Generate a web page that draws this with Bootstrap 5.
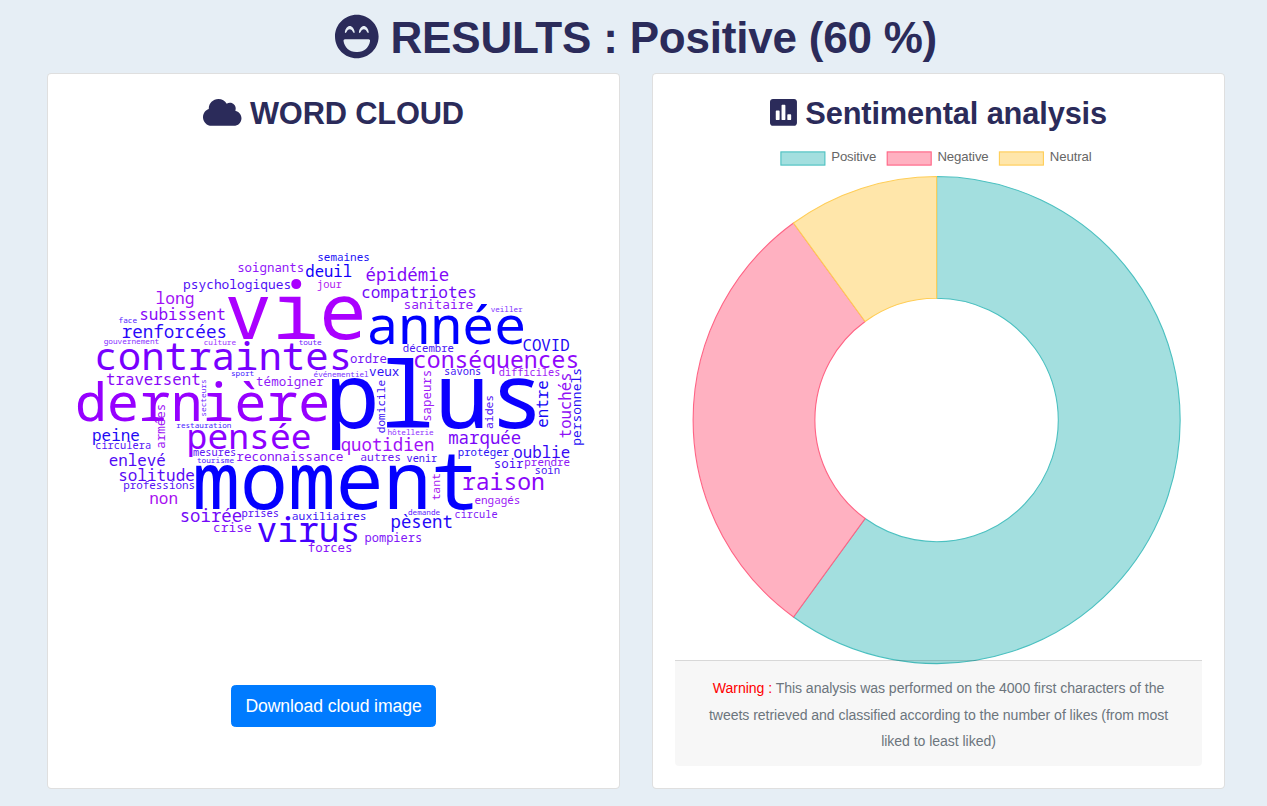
<!DOCTYPE html>
<html lang="en">
<head>
<meta charset="utf-8">
<meta name="viewport" content="width=device-width, initial-scale=1">
<title>Results</title>
<link href="https://cdn.jsdelivr.net/npm/bootstrap@5.3.0/dist/css/bootstrap.min.css" rel="stylesheet">
<style>
  html { font-size: 17.6px; }
  body { background: #e6eef5; font-family: "Liberation Sans", Arial, sans-serif; height: 806px; overflow: hidden; }
  .results { padding: 11px 42px 17px 47px; height: 806px; }
  h1, h2 { color: #2b2b5a; font-weight: 700; white-space: nowrap; }
  h1 { font-size: 44px; line-height: 53px; margin-bottom: 9px; letter-spacing: -.21px; }
  h2 { font-size: 30.8px; line-height: 35px; margin-bottom: 10.8px; letter-spacing: -.15px; }
  .fa { height: 1em; vertical-align: -.125em; fill: currentColor; overflow: visible; }
  h1 .fa { height: 45px; }
  .panels { gap: 32px; }
  .panel { border: 1px solid rgba(0,0,0,.125); border-radius: 4.4px; background: #fff; flex: 1 1 0; min-width: 0; }
  .panel .card-body { padding: 22px; }
  .plot { display: block; width: 527px; overflow: visible; }
  .btn-download { background: #007bff; border-color: #007bff; color: #fff; font-size: 17.6px; line-height: 26.8px; padding: 7.2px 13.2px 6px; border-radius: 4.4px; letter-spacing: -.09px; }
  .note { position: relative; background: rgba(0,0,0,.03); border-top: 1px solid rgba(0,0,0,.125); border-radius: 0 0 4px 4px; height: 106.4px; padding: 14.3px 22px 0; color: #6c757d; font-size: 14.08px; line-height: 26.4px; letter-spacing: -.055px; }
  .note b { color: #f00; font-weight: 400; }
  #cloud text { font-family: "Droid Sans Mono", "Noto Sans Mono", "DejaVu Sans Mono", monospace; }
  .legend-text { font: 13.2px "Liberation Sans", Arial, sans-serif; fill: #666; }
</style>
</head>
<body>
<main class="results d-flex flex-column">
  <h1 class="text-center"><svg class="fa" viewBox="0 0 496 512"><path d="M248 8C111 8 0 119 0 256s111 248 248 248 248-111 248-248S385 8 248 8zm24 199.4c3.3-42.1 32.2-71.4 56-71.4s52.7 29.3 56 71.4c.7 8.6-10.8 11.9-14.9 4.5l-9.5-17c-7.7-13.7-19.2-21.6-31.5-21.6s-23.8 7.9-31.5 21.6l-9.5 17c-4.2 7.4-15.8 4.1-15.1-4.5zm-160 0c3.3-42.1 32.2-71.4 56-71.4s52.7 29.3 56 71.4c.7 8.6-10.8 11.9-14.9 4.5l-9.5-17c-7.7-13.7-19.2-21.6-31.5-21.6s-23.8 7.9-31.5 21.6l-9.5 17c-4.3 7.4-15.8 4-15.1-4.5zM398.9 306C390 377 329.4 432 256 432h-16c-73.4 0-134-55-142.9-126-1.2-9.5 6.3-18 15.9-18h270c9.6 0 17.1 8.4 15.9 18z"/></svg> RESULTS : Positive (60 %)</h1>
  <div class="panels d-flex flex-grow-1">
    <section class="card panel">
      <div class="card-body text-center">
        <h2><svg class="fa" viewBox="0 0 640 512"><path d="M537.6 226.6c4.1-10.7 6.4-22.4 6.4-34.6 0-53-43-96-96-96-19.7 0-38.1 6-53.3 16.2C367 64.2 315.3 32 256 32c-88.4 0-160 71.6-160 160 0 2.7.1 5.4.2 8.1C40.2 219.8 0 273.2 0 336c0 79.5 64.5 144 144 144h368c70.7 0 128-57.3 128-128 0-61.9-44-113.6-102.4-125.4z"/></svg> WORD CLOUD</h2>
        <svg id="cloud" class="plot" viewBox="70 142 527 543" height="543"></svg>
        <a class="btn btn-download" role="button">Download cloud image</a>
      </div>
    </section>
    <section class="card panel">
      <div class="card-body text-center">
        <h2><svg class="fa" viewBox="0 0 448 512"><path d="M400 32H48C21.5 32 0 53.5 0 80v352c0 26.5 21.5 48 48 48h352c26.5 0 48-21.5 48-48V80c0-26.5-21.5-48-48-48zM160 368c0 8.84-7.16 16-16 16h-32c-8.84 0-16-7.16-16-16V240c0-8.84 7.16-16 16-16h32c8.84 0 16 7.16 16 16v128zm96 0c0 8.84-7.16 16-16 16h-32c-8.84 0-16-7.16-16-16V144c0-8.84 7.16-16 16-16h32c8.84 0 16 7.16 16 16v224zm96 0c0 8.84-7.16 16-16 16h-32c-8.84 0-16-7.16-16-16v-64c0-8.84 7.16-16 16-16h32c8.84 0 16 7.16 16 16v64z"/></svg> Sentimental analysis</h2>
        <svg class="plot" viewBox="675 142 527 518" height="518" stroke-width="1.1">
          <g>
            <rect x="780.9" y="151.9" width="44" height="13.2" fill="#a3dfdf" stroke="#4bc0c0"/>
            <rect x="887.2" y="151.9" width="44" height="13.2" fill="#ffb1c1" stroke="#ff6384"/>
            <rect x="999.4" y="151.9" width="44" height="13.2" fill="#ffe6aa" stroke="#ffcd56"/>
            <text class="legend-text" x="831.3" y="161" textLength="45" stroke="none">Positive</text>
            <text class="legend-text" x="937.4" y="161" textLength="51.3" stroke="none">Negative</text>
            <text class="legend-text" x="1049.8" y="161" textLength="42" stroke="none">Neutral</text>
          </g>
          <path d="M936.6 176.5A243.5 243.5 0 1 1 793.5 617L865.1 518.5A121.7 121.7 0 1 0 936.6 298.3Z" fill="#a3dfdf" stroke="#4bc0c0"/>
          <path d="M793.5 617A243.5 243.5 0 0 1 793.5 223L865.1 321.5A121.7 121.7 0 0 0 865.1 518.5Z" fill="#ffb1c1" stroke="#ff6384"/>
          <path d="M793.5 223A243.5 243.5 0 0 1 936.6 176.5V298.3A121.7 121.7 0 0 0 865.1 321.5Z" fill="#ffe6aa" stroke="#ffcd56"/>
        </svg>
        <div class="note"><b>Warning :</b> This analysis was performed on the 4000 first characters of the tweets retrieved and classified according to the number of likes (from most liked to least liked)</div>
      </div>
    </section>
  </div>
</main>
<script src="https://cdn.jsdelivr.net/npm/bootstrap@5.3.0/dist/js/bootstrap.bundle.min.js"></script>
<script>
  // word, start, end, baseline, colour; a sixth field marks a word that reads upwards
  const words = [
    ["long",156.7,193.3,304.3,"#a010f5"],["subissent",140.7,224.7,320.3,"#8a08f8"],["face",119,136.7,322.7,"#5520ff"],
    ["renforcées",122.5,225.3,338,"#2a08fa"],["gouvernement",104,158.7,344.3,"#8830ff"],["culture",204.3,235.7,345.3,"#a035ff"],
    ["psychologiques",184,290,288.7,"#5010f5"],["soignants",238.3,303,271.7,"#9015f8"],["semaines",318.3,368.7,261,"#2010f5"],
    ["deuil",306,351.3,277.3,"#1000fa"],["jour",317.5,341.7,288,"#b020f0"],["vie",227,362.5,339.3,"#aa00ff"],
    ["toute",299,321.3,344.7,"#7025ff"],["épidémie",366.3,448.2,281,"#8208f8"],["compatriotes",362.5,475.3,298.3,"#7008f8"],
    ["sanitaire",404.7,472.5,309,"#9018f8"],["veiller",491,522.3,311.7,"#8030ff"],["année",369.6,523.3,343.7,"#0000ff"],
    ["COVID",523.5,569,351,"#2008f5"],["décembre",403.3,453.5,352.3,"#4a15f5"],["contraintes",97.3,348.3,370.3,"#7800ff"],
    ["traversent",106.7,199.7,385,"#8a08f8"],["dernière",77.6,327.3,421.3,"#9600ff"],["secteurs",380,416,205.7,"#7028ff",1],
    ["armées",405,448,165.3,"#a018f5",1],["restauration",176.7,231,428,"#4a22ff"],["peine",93.3,139,441.3,"#2008f5"],
    ["circulera",96,150.3,448.9,"#5515f5"],["pensée",189.3,309.7,449,"#8c00ff"],["mesures",193.5,235.3,455.8,"#6015f5"],
    ["sport",231.7,253.7,375.7,"#4520ff"],["ordre",350.5,386.3,363,"#7818f8"],["témoigner",256.7,323.5,385.5,"#9018f8"],
    ["événementiel",313.9,368.3,376.7,"#7830ff"],["veux",369.5,399,375.5,"#3010f5"],["plus",332,535.3,428.3,"#0c00ff"],
    ["domicile",380.5,432.7,385,"#4012f5",1],["quotidien",341.5,433.3,451.3,"#a010f8"],["conséquences",414.7,577,368,"#9008fc"],
    ["savons",445,480.3,374.5,"#4010f5"],["difficiles",499.3,559.3,375.5,"#a020f5"],["sapeurs",371,420.7,431,"#a020f8",1],
    ["aides",396,428.3,493.3,"#5010f5",1],["entre",381,427,547.5,"#1808f5",1],["touchés",374,437.5,571,"#9010f5",1],
    ["personnels",369.3,444.7,580.7,"#2810f5",1],["hôtellerie",388,433.3,435,"#9030ff"],["marquée",449,520.3,443.7,"#7c08f8"],
    ["protéger",458.6,508.7,455.7,"#2c12f5"],["oublie",514,569.3,457.7,"#3508f5"],["enlevé",109.5,165,465.7,"#5008f5"],
    ["solitude",119.7,194,481.3,"#5808f5"],["professions",124,194,489.3,"#5512f5"],["non",150.5,177,504.3,"#a80ef0"],
    ["tourisme",197.3,233.7,462.5,"#5020ff"],["soirée",181.3,241.3,521.8,"#7408f8"],["crise",213.9,251,531.7,"#8412f8"],
    ["moment",196,473.7,508.5,"#0400ff"],["reconnaissance",236.9,343,461,"#8812f8"],["autres",361,400,461,"#6a15f5"],
    ["prises",242.3,278,517.3,"#5812f5"],["auxiliaires",292.5,365.5,519.7,"#3a12f5"],["virus",257.5,357,542.3,"#4400ff"],
    ["forces",308.6,351.3,551.9,"#8815f8"],["venir",406.9,437,461.5,"#4512f5"],["soir",495,523.3,468,"#4810f5"],
    ["prendre",525.2,569.5,465.5,"#9018f5"],["soin",535.5,559.3,473.5,"#4815f5"],["raison",463,543.3,489.9,"#8a06fa"],
    ["tant",473.9,500,439.7,"#a820f0",1],["engagés",475,519.3,504.3,"#9c18f5"],["demande",408.3,439.7,515,"#6020ff"],
    ["pèsent",391.9,451.7,528.2,"#2408f8"],["circule",455.3,497,517.7,"#8018f8"],["pompiers",365.5,421,541.7,"#8015f8"]
  ];
  const cloud = document.getElementById("cloud");
  const pen = document.createElement("canvas").getContext("2d");
  pen.font = '1000px "Droid Sans Mono", "Noto Sans Mono", "DejaVu Sans Mono", monospace';
  for (const [word, from, to, base, colour, up] of words) {
    const m = pen.measureText(word);
    const size = (to - from) / (m.actualBoundingBoxRight + m.actualBoundingBoxLeft) * 1000;
    const lead = m.actualBoundingBoxLeft * size / 1000;
    const t = document.createElementNS("http://www.w3.org/2000/svg", "text");
    t.setAttribute("font-size", size.toFixed(2));
    t.setAttribute("fill", colour);
    t.setAttribute("transform", up ? `translate(${base} ${to - lead}) rotate(-90)` : `translate(${from + lead} ${base})`);
    t.textContent = word;
    cloud.append(t);
  }
</script>
</body>
</html>
